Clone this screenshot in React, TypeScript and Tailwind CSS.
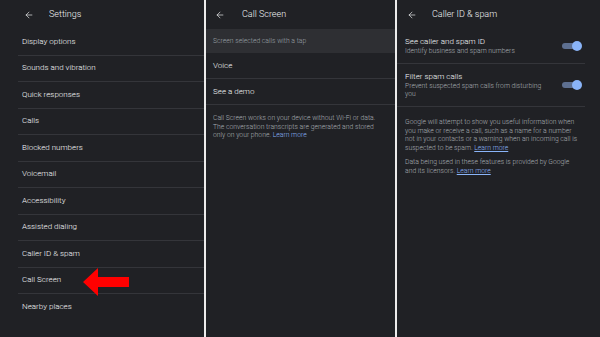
import { ArrowLeft } from "lucide-react"

const settings = [
  "Display options",
  "Sounds and vibration",
  "Quick responses",
  "Calls",
  "Blocked numbers",
  "Voicemail",
  "Accessibility",
  "Assisted dialing",
  "Caller ID & spam",
  "Call Screen",
  "Nearby places",
]

function Header({ title, arrowPad, titlePad }: { title: string; arrowPad: string; titlePad: string }) {
  return (
    <div className={`flex h-[29px] items-center ${arrowPad}`}>
      <ArrowLeft className="h-[10px] w-[10px] text-[#f1f3f4]" strokeWidth={1.6} />
      <span className={`text-[9px] text-[#f1f3f4] ${titlePad}`}>{title}</span>
    </div>
  )
}

function Toggle() {
  return (
    <div className="relative h-[10px] w-[20px] shrink-0">
      <div className="absolute left-0 top-[2px] h-[6px] w-[17px] rounded-full bg-[#5d6f90]" />
      <div className="absolute right-0 top-0 h-[10px] w-[10px] rounded-full bg-[#8ab4f8]" />
    </div>
  )
}

function RedArrow() {
  return (
    <svg width="48" height="30" viewBox="0 0 48 30" className="absolute left-[65px] top-[-13px]">
      <polygon points="0,15 15,1 15,10 46,10 46,20 15,20 15,29" fill="#ff0000" />
    </svg>
  )
}

export default function App() {
  return (
    <div className="flex h-[337px] w-[600px] overflow-hidden bg-[#202125] font-['Roboto',sans-serif] font-light">
      {/* Settings */}
      <div className="w-[204px] shrink-0 pl-[18px]">
        <Header title="Settings" arrowPad="pl-[6px]" titlePad="pl-[15px]" />
        {settings.map((s, i) => (
          <div
            key={s}
            className={`relative flex h-[26.5px] items-center pl-[4px] text-[8px] text-[#f8f9fa] ${
              i < settings.length - 1 ? "border-b border-[#34353a]" : ""
            }`}
          >
            {s}
            {s === "Call Screen" && (
              <div className="absolute left-0 top-1/2">
                <RedArrow />
              </div>
            )}
          </div>
        ))}
      </div>
      <div className="w-[2px] shrink-0 bg-[#ececec]" />

      {/* Call Screen */}
      <div className="w-[189px] shrink-0">
        <Header title="Call Screen" arrowPad="pl-[9px]" titlePad="pl-[17px]" />
        <div className="flex h-[24px] items-center bg-[#2e2f33] pl-[7px] text-[6.8px] text-[#9aa0a6]">
          Screen selected calls with a tap
        </div>
        <div className="flex h-[26px] items-center border-b border-[#34353a] pl-[7px] text-[8px] text-[#f8f9fa]">Voice</div>
        <div className="flex h-[26px] items-center border-b border-[#34353a] pl-[7px] text-[8px] text-[#f8f9fa]">See a demo</div>
        <p className="pl-[7px] pr-[8px] pt-[9px] text-[6.8px] leading-[8.6px] text-[#a8adb3]">
          Call Screen works on your device without Wi-Fi or data. The conversation transcripts are generated and stored
          only on your phone. <span className="text-[#8ab4f8]">Learn more</span>
        </p>
      </div>
      <div className="w-[2px] shrink-0 bg-[#ececec]" />

      {/* Caller ID & spam */}
      <div className="flex-1">
        <Header title="Caller ID & spam" arrowPad="pl-[10px]" titlePad="pl-[15px]" />
        <div className="mr-[15px] flex h-[35px] items-center justify-between border-b border-[#34353a] pl-[8px] pr-[3px]">
          <div>
            <div className="text-[8px] leading-[10px] text-[#f8f9fa]">See caller and spam ID</div>
            <div className="text-[6.8px] leading-[8.5px] text-[#a8adb3]">Identify business and spam numbers</div>
          </div>
          <Toggle />
        </div>
        <div className="mr-[15px] flex h-[43px] items-center justify-between border-b border-[#34353a] pl-[8px] pr-[3px]">
          <div className="w-[140px]">
            <div className="text-[8px] leading-[10px] text-[#f8f9fa]">Filter spam calls</div>
            <div className="text-[6.8px] leading-[8.5px] text-[#a8adb3]">
              Prevent suspected spam calls from disturbing you
            </div>
          </div>
          <Toggle />
        </div>
        <div className="pl-[8px] pr-[18px] pt-[11px] text-[6.8px] leading-[8.5px] text-[#a8adb3]">
          <p>
            Google will attempt to show you useful information when you make or receive a call, such as a name for a
            number not in your contacts or a warning when an incoming call is suspected to be spam.{" "}
            <span className="text-[#8ab4f8] underline">Learn more</span>
          </p>
          <p className="mt-[6px]">
            Data being used in these features is provided by Google and its licensors.{" "}
            <span className="text-[#8ab4f8] underline">Learn more</span>
          </p>
        </div>
      </div>
    </div>
  )
}
